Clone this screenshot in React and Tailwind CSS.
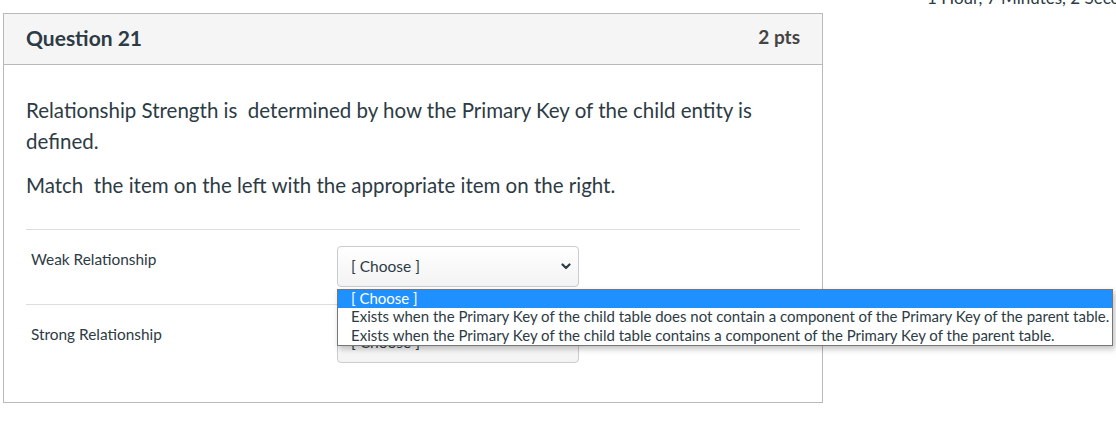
const font = { fontFamily: 'Lato, "Open Sans", sans-serif' }

const options = [
  '[ Choose ]',
  'Exists when the Primary Key of the child table does not contain a component of the Primary Key of the parent table.',
  'Exists when the Primary Key of the child table contains a component of the Primary Key of the parent table.',
]

function Chevron() {
  return (
    <svg width="10" height="7" viewBox="0 0 10 7" fill="none" stroke="#2d3b45" strokeWidth="2.2" strokeLinecap="round" strokeLinejoin="round" aria-hidden="true">
      <path d="M1.5 1.5 5 5l3.5-3.5" />
    </svg>
  )
}

function FakeSelect() {
  return (
    <div className="w-[242px] h-[41px] flex items-center justify-between pl-[13px] pr-[7px] border border-[#c7cdd1] rounded-[4px] bg-gradient-to-b from-white to-[#f3f3f3] text-[15.5px] text-[#2d3b45]">
      <span>[ Choose ]</span>
      <Chevron />
    </div>
  )
}

export default function App() {
  return (
    <div className="w-[1116px] h-[428px] bg-white overflow-hidden text-[#2d3b45]" style={font}>
      <div className="h-[13px] overflow-hidden">
        <div className="mt-[-12px] ml-[927px] whitespace-nowrap text-[17px] leading-[20px] text-[#2d3b45]">
          1 Hour, 7 Minutes, 2 Seconds
        </div>
      </div>

      <div className="ml-[3px] w-[820px] h-[390px] border border-[#b9b9b9]">
        <div className="h-[51px] bg-[#f5f5f5] border-b border-[#b9b9b9] flex items-center justify-between px-[22px] pb-[3px]">
          <h2 className="text-[21px] font-bold">Question 21</h2>
          <span className="text-[19px] font-bold text-[#444]">2 pts</span>
        </div>

        <div className="px-[22px] pt-[30px]">
          <p className="text-[20.5px] leading-[31px] pr-[40px]">
            Relationship Strength is&nbsp; determined by how the Primary Key of the child entity is defined.
          </p>
          <p className="text-[20.5px] leading-[31px] mt-[13px]">
            Match&nbsp; the item on the left with the appropriate item on the right.
          </p>

          <div className="mt-[28px] border-t border-[#dddddd]">
            <div className="h-[75px] flex border-b border-[#dddddd]">
              <div className="w-[311px] pl-[5px] pt-[19px] text-[15.4px] leading-[20px]">Weak Relationship</div>
              <div className="pt-[16px] relative">
                <FakeSelect />
                <div className="absolute left-0 top-[59px] w-[776px] border border-[#767676] bg-white shadow-[2px_3px_6px_rgba(0,0,0,0.25)] text-[15px] z-10">
                  {options.map((o, i) => (
                    <div
                      key={i}
                      className={`pl-[13px] whitespace-nowrap ${i === 0 ? 'h-[18px] leading-[17px] bg-[#1e90ff] text-white' : i === 1 ? 'h-[19px] leading-[17px] text-[#2d3b45]' : 'h-[18px] leading-[17px] text-[#2d3b45]'}`}
                    >
                      {o}
                    </div>
                  ))}
                </div>
              </div>
            </div>
            <div className="h-[75px] flex">
              <div className="w-[311px] pl-[5px] pt-[19px] text-[15.4px] leading-[20px]">Strong Relationship</div>
              <div className="pt-[17px]">
                <FakeSelect />
              </div>
            </div>
          </div>
        </div>
      </div>
    </div>
  )
}
